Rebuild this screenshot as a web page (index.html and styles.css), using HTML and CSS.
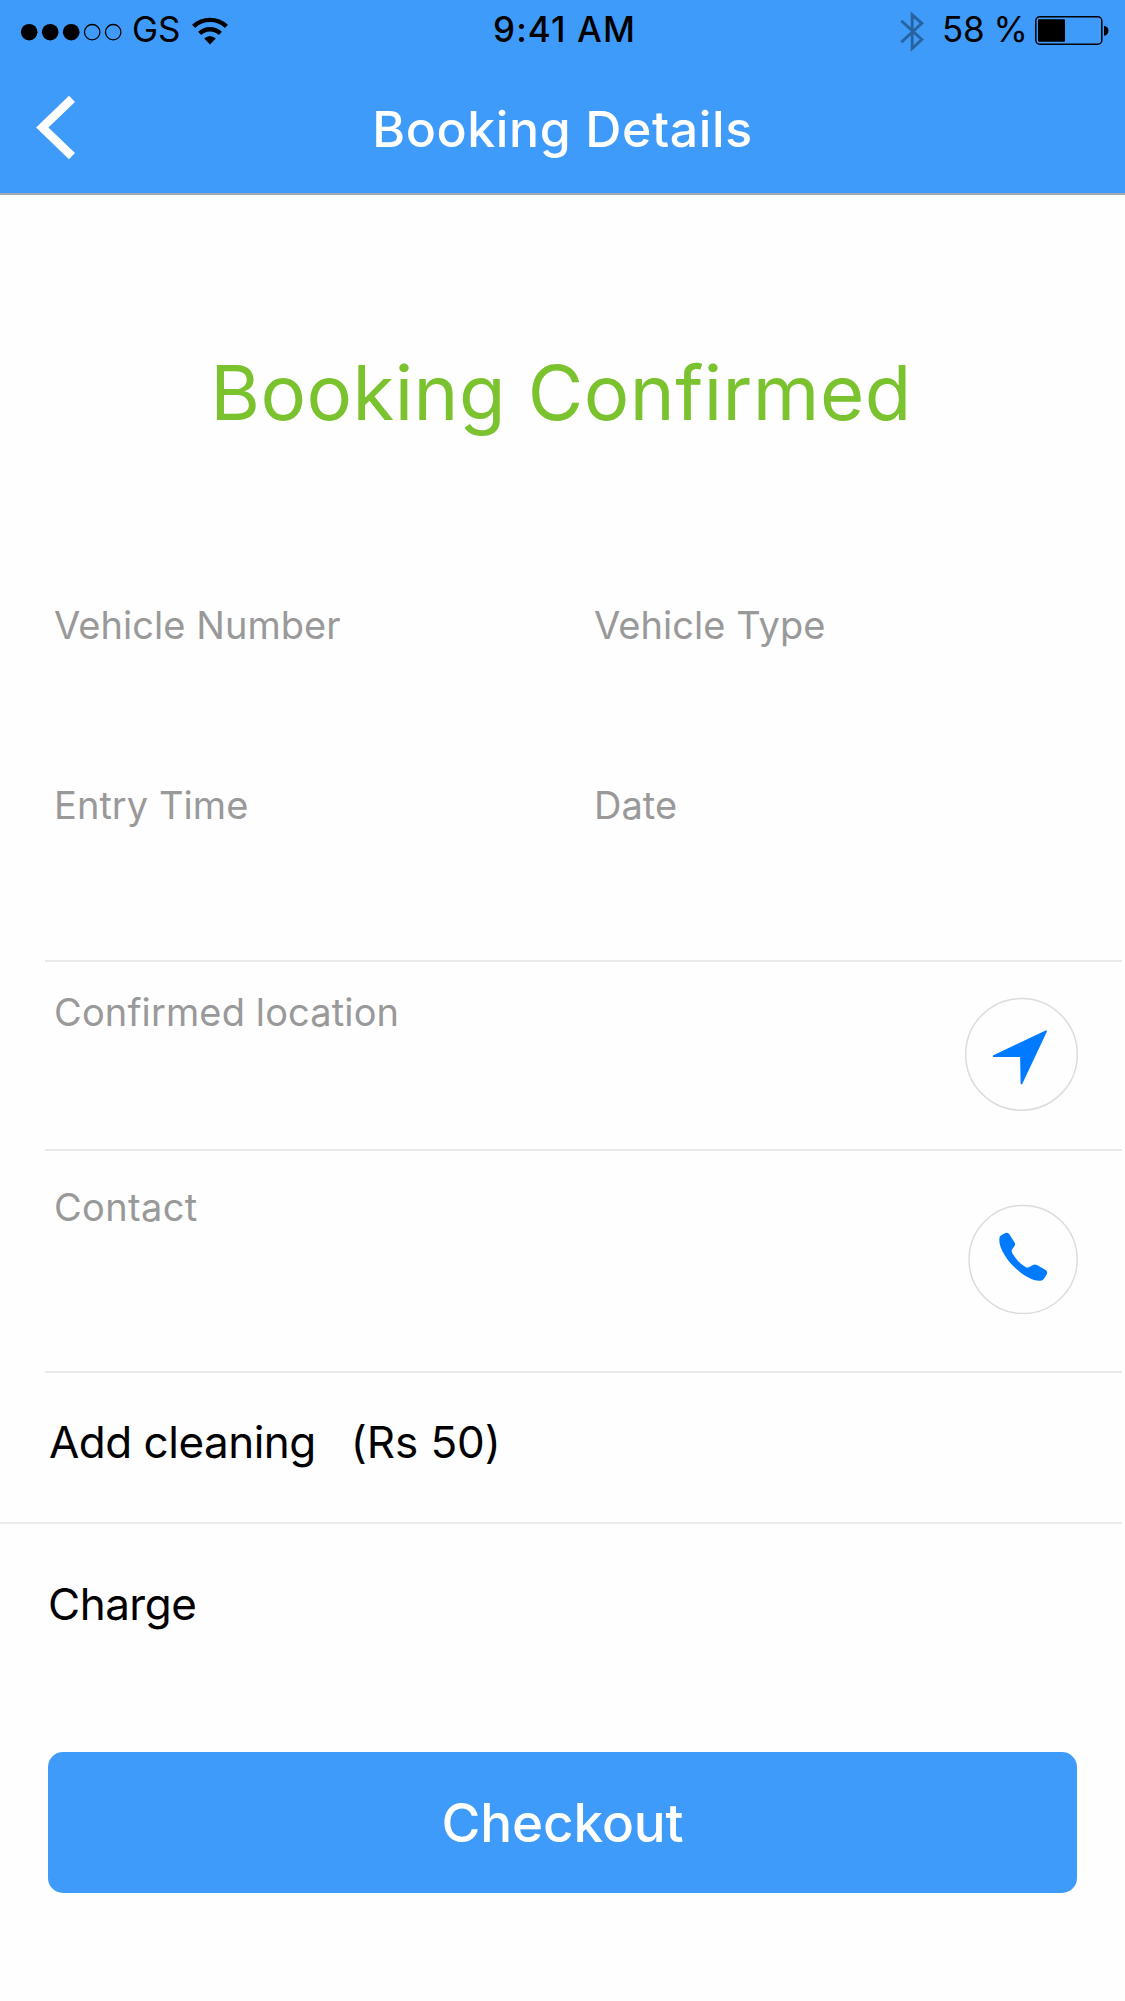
FILE: index.html
```html
<!DOCTYPE html>
<html lang="en">
<head>
<meta charset="utf-8">
<title>Booking Details</title>
<link rel="stylesheet" href="styles.css">
</head>
<body>
<header class="header">
  <div class="status">
    <div class="status-left">
      <svg class="signal" viewBox="20 0 112 59" width="112" height="59">
        <circle cx="29.2" cy="32.2" r="8.3"/>
        <circle cx="50.2" cy="32.2" r="8.3"/>
        <circle cx="71.2" cy="32.2" r="8.3"/>
        <circle class="ring" cx="92.2" cy="32.2" r="7.7"/>
        <circle class="ring" cx="113.2" cy="32.2" r="7.7"/>
      </svg>
      <span class="carrier">GS</span>
      <svg viewBox="190 0 40 59" width="40" height="59">
        <path class="wifi" d="M193.6 26.4 A24 24 0 0 1 226.4 26.4 M199.6 33.4 A15 15 0 0 1 220.4 33.4"/>
        <path d="M204.2 38.6 Q210 33.2 215.8 38.6 L210 44.6 Z"/>
      </svg>
    </div>
    <span class="clock">9:41 AM</span>
    <div class="status-right">
      <svg viewBox="898 0 44 59" width="44" height="59">
        <path class="bluetooth" d="M901.3 20.8 L921.8 39.5 L912.2 48.5 V14.8 L921.8 23.3 L901.3 42.3"/>
      </svg>
      <span class="percent">58 %</span>
      <svg viewBox="1034 0 78 59" width="78" height="59">
        <rect class="battery" x="1035.8" y="16.8" width="66" height="27.4" rx="4"/>
        <rect x="1038" y="19.3" width="27" height="22.5" rx="1"/>
        <path d="M1104 25.7 C1110 26.5 1110 35 1104 35.7 Z"/>
      </svg>
    </div>
  </div>
  <div class="navbar">
    <svg class="back" viewBox="32 90 50 74" width="50" height="74">
      <path d="M72 98.8 L42.3 127.5 L72 156.2"/>
    </svg>
    <h1 class="title">Booking Details</h1>
  </div>
</header>

<main>
  <h2 class="headline">Booking Confirmed</h2>

  <section class="details">
    <span class="label">Vehicle Number</span>
    <span class="label">Vehicle Type</span>
    <span class="label">Entry Time</span>
    <span class="label">Date</span>
  </section>

  <section class="row location">
    <span class="label label-mid">Confirmed location</span>
    <svg class="action" viewBox="964 997 114 114" width="114" height="114">
      <circle class="outline" cx="1021.5" cy="1054.4" r="55.8"/>
      <path class="glyph" d="M1046 1031.4 L993.8 1056 L1021 1056.2 L1021.5 1083.4 Z"/>
    </svg>
  </section>

  <section class="row contact">
    <span class="label label-wide">Contact</span>
    <svg class="action" viewBox="84 193 330 330" width="110" height="110">
      <circle class="outline phone-outline" cx="249.3" cy="359.5" r="162.3"/>
      <path class="phone" d="M178 300 Q177 290 185 286 L196 280 Q202 277 207 282 L223 307 Q228 314 223 320 L217 328 Q213 334 217 341 C227 359 241 373 258 383 Q263 385 268 382 L279 376 Q285 373 291 376 L317 391 Q323 395 321 402 L313 416 Q309 423 302 423 C280 425 253 409 230 389 C201 363 177 326 178 300 Z"/>
    </svg>
  </section>

  <section class="row extras">
    <span class="item">Add cleaning</span>
    <span class="price">(Rs 50)</span>
  </section>

  <section class="charge">
    <span class="item">Charge</span>
  </section>

  <button class="checkout" type="button">Checkout</button>
</main>
</body>
</html>
```

FILE: styles.css
```css
* {
  box-sizing: border-box;
}

body {
  margin: 0;
  width: 1125px;
  height: 2001px;
  background: #fefefe;
  color: #000;
  font-family: "Inter", "Liberation Sans", sans-serif;
}

svg {
  display: block;
  flex: none;
}

.header {
  height: 195px;
  background: #3f9bfa;
  border-bottom: 2px solid #a3a9b1;
}

.status {
  display: grid;
  grid-template-columns: 440px 1fr 227px;
  height: 59px;
  font-size: 35px;
  line-height: 59px;
  white-space: nowrap;
}

.status-left,
.status-right {
  display: flex;
}

.status-left {
  padding-left: 20px;
}

.ring {
  fill: none;
  stroke: #000;
  stroke-width: 1.3;
}

.carrier {
  width: 58px;
  font-weight: 400;
}

.wifi {
  fill: none;
  stroke: #000;
  stroke-width: 4.4;
}

.clock {
  padding-left: 53px;
  font-weight: 500;
  letter-spacing: 1.1px;
}

.bluetooth {
  fill: none;
  stroke: #27639f;
  stroke-width: 2.9;
}

.percent {
  width: 92px;
  letter-spacing: -0.4px;
}

.battery {
  fill: none;
  stroke: #000;
  stroke-width: 1.5;
}

.navbar {
  display: grid;
  grid-template-columns: 50px 1fr 50px;
  align-items: start;
  height: 134px;
  padding: 31px 32px 0;
}

.back path {
  fill: none;
  stroke: #fff;
  stroke-width: 8.6;
}

.title {
  margin: 0;
  padding-top: 1px;
  color: #fff;
  font-size: 50px;
  font-weight: 500;
  line-height: 76px;
  letter-spacing: 0.6px;
  text-align: center;
}

.headline {
  margin: 0;
  padding-right: 3px;
  color: #7ac22e;
  font-size: 76px;
  font-weight: 400;
  line-height: 395px;
  letter-spacing: 0.45px;
  text-align: center;
}

.details {
  display: grid;
  grid-template-columns: 540px 1fr;
  grid-template-rows: 180px 190px;
  padding-left: 54px;
}

.label {
  color: #999;
  font-size: 38px;
  line-height: 70px;
  letter-spacing: 0.05px;
}

.label-mid {
  letter-spacing: 0.13px;
}

.label-wide {
  letter-spacing: 0.35px;
}

.row {
  display: flex;
  justify-content: space-between;
  align-items: flex-start;
  margin: 0 3px 0 45px;
  border-top: 2px solid #e8e8e8;
}

.location {
  height: 189px;
  padding: 15px 44px 0 9px;
}

.location .action {
  margin-top: 20px;
}

.contact {
  height: 222px;
  padding: 21px 44px 0 9px;
}

.contact .action {
  margin-top: 32px;
}

.outline {
  fill: none;
  stroke: #dcdcdc;
  stroke-width: 1.5;
}

.phone-outline {
  stroke-width: 4.5;
}

.glyph {
  fill: #007aff;
  stroke: #007aff;
  stroke-width: 1.8;
  stroke-linejoin: round;
}

.phone {
  fill: #007aff;
}

.item,
.price {
  font-size: 44px;
  line-height: 70px;
  letter-spacing: -0.5px;
}

.price {
  letter-spacing: -0.1px;
}

.extras {
  justify-content: flex-start;
  gap: 35px;
  height: 151px;
  padding: 34px 0 0 4px;
}

.charge {
  height: 230px;
  margin-right: 3px;
  padding: 45px 0 0 48px;
  border-top: 2px solid #ebebeb;
}

.checkout {
  display: block;
  width: 1029px;
  height: 141px;
  margin-left: 48px;
  padding: 2px 0 0;
  border: 0;
  border-radius: 15px;
  background: #3f9bfa;
  color: #fff;
  font-family: inherit;
  font-size: 53px;
  font-weight: 500;
  line-height: 139px;
  letter-spacing: -0.1px;
}
```
